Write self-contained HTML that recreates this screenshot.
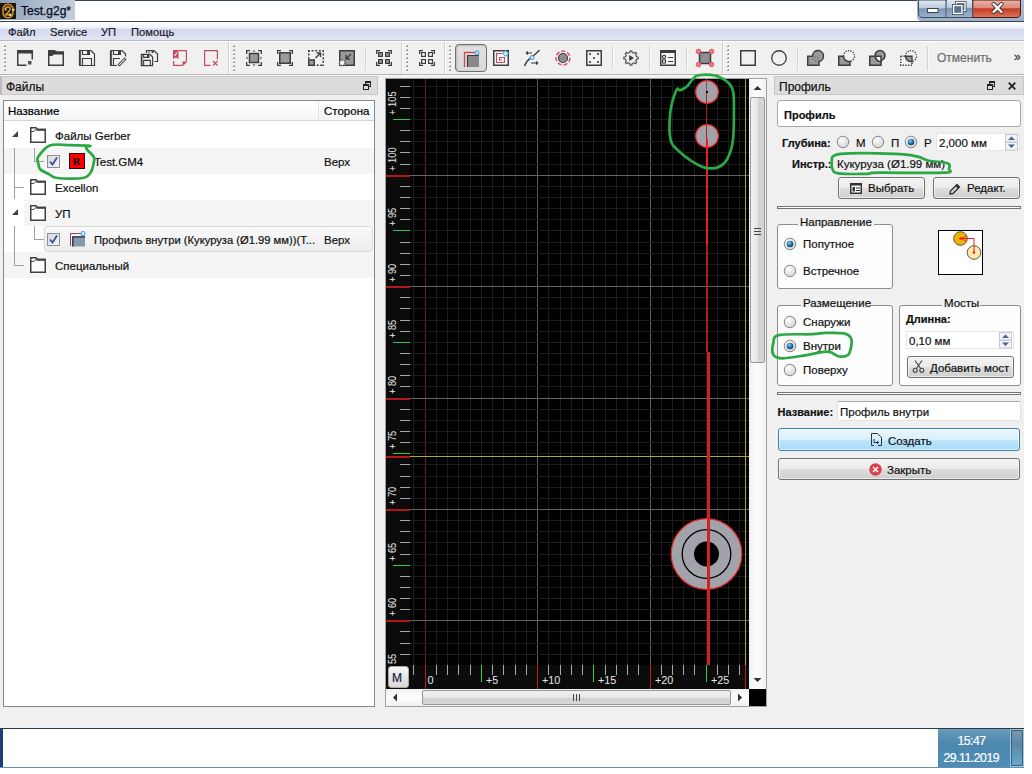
<!DOCTYPE html>
<html><head><meta charset="utf-8">
<style>
*{box-sizing:border-box;margin:0;padding:0}
html,body{width:1032px;height:774px;overflow:hidden;background:#fff;font-family:"Liberation Sans",sans-serif;font-size:11.5px;color:#000}
.a{position:absolute}
.t{position:absolute;white-space:nowrap;line-height:1;-webkit-text-stroke:0.2px currentColor}
.b{font-weight:bold;font-size:11px}
svg{position:absolute;overflow:visible}
</style></head><body>
<!-- window background -->
<div class="a" style="left:0;top:0;width:1024px;height:728px;background:#f0f0f0"></div>

<!-- TITLE BAR -->
<div class="a" style="left:0;top:0;width:1024px;height:21px;background:#fff;border-top:1px solid #3a4652"></div><div class="a" style="left:0;top:0;width:75px;height:1px;background:#8fa2b8"></div>
<div class="a" style="left:0;top:0;width:75px;height:20px;background:linear-gradient(100deg,#8d9fb6 0%,#a9b8ca 45%,#c3cfdc 100%)"></div>
<svg style="left:0;top:3px" width="16" height="16"><rect x="0" y="0" width="16" height="16" fill="#1c1a0e"/><rect x="3" y="1.2" width="10" height="13.6" rx="5" ry="5" fill="none" stroke="#d98f2e" stroke-width="1.5"/><path d="M5.5 6 Q6 3.8 8 3.8 Q10.3 3.8 10.2 6 Q10 7.8 5.6 11.8 H10.5" fill="none" stroke="#e0962e" stroke-width="1.6"/><rect x="4.5" y="5.5" width="2" height="2" fill="#e8e0a0" opacity=".8"/><rect x="12" y="5.8" width="2.5" height="2" fill="#f0e8b0" opacity=".85"/><rect x="9" y="10.5" width="2.5" height="2.5" fill="#f0e8b0" opacity=".8"/></svg>
<div class="t" style="left:21px;top:5px;font-size:12px;color:#050a20;-webkit-text-stroke:0.25px #050a20">Test.g2g*</div>
<!-- caption buttons -->
<svg style="left:916px;top:0" width="108" height="21">
<defs>
<linearGradient id="cbB" x1="0" y1="0" x2="0" y2="1"><stop offset="0" stop-color="#e2e9f1"/><stop offset="0.45" stop-color="#c0cddd"/><stop offset="0.5" stop-color="#7b95b5"/><stop offset="1" stop-color="#9fb4cc"/></linearGradient>
<linearGradient id="cbR" x1="0" y1="0" x2="0" y2="1"><stop offset="0" stop-color="#eab1a6"/><stop offset="0.45" stop-color="#da8b7c"/><stop offset="0.5" stop-color="#c23a24"/><stop offset="1" stop-color="#e0765f"/></linearGradient>
<linearGradient id="cbF" x1="0" y1="0" x2="0" y2="1"><stop offset="0" stop-color="#aebfd3"/><stop offset="1" stop-color="#9cb0c8"/></linearGradient>
</defs>
<path d="M1 0 H108 V21 H6 Q1 21 1 16 Z" fill="url(#cbF)"/>
<path d="M2.5 0 V13 Q2.5 17.5 7 17.5 H30 V0 Z" fill="url(#cbB)" stroke="#3e4c60" stroke-width="1"/>
<rect x="30.5" y="-1" width="26" height="18.5" fill="url(#cbB)" stroke="#3e4c60" stroke-width="1"/>
<path d="M57 0 V17.5 H100 Q104.5 17.5 104.5 13 V0 Z" fill="url(#cbR)" stroke="#4a1a14" stroke-width="1"/>
<path d="M30.5 1 V17 M57 1 V17" stroke="#dfe7f0" stroke-width="0.6" opacity=".6"/>
<rect x="11.5" y="8.5" width="10.5" height="4" fill="#fff" stroke="#3a4658" stroke-width="1"/>
<rect x="40.5" y="2.5" width="8.5" height="8" fill="none" stroke="#3a4658" stroke-width="3"/>
<rect x="40.5" y="2.5" width="8.5" height="8" fill="none" stroke="#fff" stroke-width="1.4"/>
<rect x="37.5" y="5.5" width="8.5" height="8" fill="#6f86a4" stroke="#3a4658" stroke-width="3"/>
<rect x="37.5" y="5.5" width="8.5" height="8" fill="#5a7090" stroke="#fff" stroke-width="1.4"/>
<path d="M77.5 4 L85.5 12 M85.5 4 L77.5 12" stroke="#40302c" stroke-width="4" stroke-linecap="round"/>
<path d="M77.5 4 L85.5 12 M85.5 4 L77.5 12" stroke="#fff" stroke-width="2.4" stroke-linecap="round"/>
</svg>
<div class="a" style="left:0;top:21px;width:1024px;height:1px;background:#3a4450"></div>

<!-- MENU BAR -->
<div class="a" style="left:0;top:22px;width:1024px;height:19px;background:linear-gradient(#ffffff 0px,#eef1f8 6px,#d3d9ec 7px,#e1e5f3 18px);border-bottom:1px solid #b5b8c5"></div>
<div class="a" style="left:0;top:41px;width:1024px;height:1px;background:#fff"></div>
<div class="t" style="left:8px;top:27px;font-size:11.2px;color:#1a1a2a">Файл</div>
<div class="t" style="left:50px;top:27px;font-size:11.2px;color:#1a1a2a">Service</div>
<div class="t" style="left:101px;top:27px;font-size:11.2px;color:#1a1a2a">УП</div>
<div class="t" style="left:131px;top:27px;font-size:11.2px;color:#1a1a2a">Помощь</div>

<!-- TOOLBAR -->
<div class="a" style="left:0;top:74px;width:1024px;height:2px;border-top:1px solid #b4b4b4;border-bottom:1px solid #f8f8f8"></div>
<div class="a" style="left:0;top:42px;width:1024px;height:31px;background:#f0f0f0"></div>
<svg style="left:3px;top:45px" width="4" height="28" shape-rendering="crispEdges"><rect x="2" y="0" width="1" height="1" fill="#b0b0b0"/><rect x="1" y="1" width="2" height="1" fill="#8c8c8c"/><rect x="2" y="2" width="1" height="1" fill="#fff"/><rect x="2" y="4" width="1" height="1" fill="#b0b0b0"/><rect x="1" y="5" width="2" height="1" fill="#8c8c8c"/><rect x="2" y="6" width="1" height="1" fill="#fff"/><rect x="2" y="8" width="1" height="1" fill="#b0b0b0"/><rect x="1" y="9" width="2" height="1" fill="#8c8c8c"/><rect x="2" y="10" width="1" height="1" fill="#fff"/><rect x="2" y="12" width="1" height="1" fill="#b0b0b0"/><rect x="1" y="13" width="2" height="1" fill="#8c8c8c"/><rect x="2" y="14" width="1" height="1" fill="#fff"/><rect x="2" y="16" width="1" height="1" fill="#b0b0b0"/><rect x="1" y="17" width="2" height="1" fill="#8c8c8c"/><rect x="2" y="18" width="1" height="1" fill="#fff"/><rect x="2" y="20" width="1" height="1" fill="#b0b0b0"/><rect x="1" y="21" width="2" height="1" fill="#8c8c8c"/><rect x="2" y="22" width="1" height="1" fill="#fff"/><rect x="2" y="24" width="1" height="1" fill="#b0b0b0"/><rect x="1" y="25" width="2" height="1" fill="#8c8c8c"/><rect x="2" y="26" width="1" height="1" fill="#fff"/></svg>
<svg style="left:232px;top:45px" width="4" height="28" shape-rendering="crispEdges"><rect x="2" y="0" width="1" height="1" fill="#b0b0b0"/><rect x="1" y="1" width="2" height="1" fill="#8c8c8c"/><rect x="2" y="2" width="1" height="1" fill="#fff"/><rect x="2" y="4" width="1" height="1" fill="#b0b0b0"/><rect x="1" y="5" width="2" height="1" fill="#8c8c8c"/><rect x="2" y="6" width="1" height="1" fill="#fff"/><rect x="2" y="8" width="1" height="1" fill="#b0b0b0"/><rect x="1" y="9" width="2" height="1" fill="#8c8c8c"/><rect x="2" y="10" width="1" height="1" fill="#fff"/><rect x="2" y="12" width="1" height="1" fill="#b0b0b0"/><rect x="1" y="13" width="2" height="1" fill="#8c8c8c"/><rect x="2" y="14" width="1" height="1" fill="#fff"/><rect x="2" y="16" width="1" height="1" fill="#b0b0b0"/><rect x="1" y="17" width="2" height="1" fill="#8c8c8c"/><rect x="2" y="18" width="1" height="1" fill="#fff"/><rect x="2" y="20" width="1" height="1" fill="#b0b0b0"/><rect x="1" y="21" width="2" height="1" fill="#8c8c8c"/><rect x="2" y="22" width="1" height="1" fill="#fff"/><rect x="2" y="24" width="1" height="1" fill="#b0b0b0"/><rect x="1" y="25" width="2" height="1" fill="#8c8c8c"/><rect x="2" y="26" width="1" height="1" fill="#fff"/></svg>
<svg style="left:405px;top:45px" width="4" height="28" shape-rendering="crispEdges"><rect x="2" y="0" width="1" height="1" fill="#b0b0b0"/><rect x="1" y="1" width="2" height="1" fill="#8c8c8c"/><rect x="2" y="2" width="1" height="1" fill="#fff"/><rect x="2" y="4" width="1" height="1" fill="#b0b0b0"/><rect x="1" y="5" width="2" height="1" fill="#8c8c8c"/><rect x="2" y="6" width="1" height="1" fill="#fff"/><rect x="2" y="8" width="1" height="1" fill="#b0b0b0"/><rect x="1" y="9" width="2" height="1" fill="#8c8c8c"/><rect x="2" y="10" width="1" height="1" fill="#fff"/><rect x="2" y="12" width="1" height="1" fill="#b0b0b0"/><rect x="1" y="13" width="2" height="1" fill="#8c8c8c"/><rect x="2" y="14" width="1" height="1" fill="#fff"/><rect x="2" y="16" width="1" height="1" fill="#b0b0b0"/><rect x="1" y="17" width="2" height="1" fill="#8c8c8c"/><rect x="2" y="18" width="1" height="1" fill="#fff"/><rect x="2" y="20" width="1" height="1" fill="#b0b0b0"/><rect x="1" y="21" width="2" height="1" fill="#8c8c8c"/><rect x="2" y="22" width="1" height="1" fill="#fff"/><rect x="2" y="24" width="1" height="1" fill="#b0b0b0"/><rect x="1" y="25" width="2" height="1" fill="#8c8c8c"/><rect x="2" y="26" width="1" height="1" fill="#fff"/></svg>
<svg style="left:448px;top:45px" width="4" height="28" shape-rendering="crispEdges"><rect x="2" y="0" width="1" height="1" fill="#b0b0b0"/><rect x="1" y="1" width="2" height="1" fill="#8c8c8c"/><rect x="2" y="2" width="1" height="1" fill="#fff"/><rect x="2" y="4" width="1" height="1" fill="#b0b0b0"/><rect x="1" y="5" width="2" height="1" fill="#8c8c8c"/><rect x="2" y="6" width="1" height="1" fill="#fff"/><rect x="2" y="8" width="1" height="1" fill="#b0b0b0"/><rect x="1" y="9" width="2" height="1" fill="#8c8c8c"/><rect x="2" y="10" width="1" height="1" fill="#fff"/><rect x="2" y="12" width="1" height="1" fill="#b0b0b0"/><rect x="1" y="13" width="2" height="1" fill="#8c8c8c"/><rect x="2" y="14" width="1" height="1" fill="#fff"/><rect x="2" y="16" width="1" height="1" fill="#b0b0b0"/><rect x="1" y="17" width="2" height="1" fill="#8c8c8c"/><rect x="2" y="18" width="1" height="1" fill="#fff"/><rect x="2" y="20" width="1" height="1" fill="#b0b0b0"/><rect x="1" y="21" width="2" height="1" fill="#8c8c8c"/><rect x="2" y="22" width="1" height="1" fill="#fff"/><rect x="2" y="24" width="1" height="1" fill="#b0b0b0"/><rect x="1" y="25" width="2" height="1" fill="#8c8c8c"/><rect x="2" y="26" width="1" height="1" fill="#fff"/></svg>
<svg style="left:726px;top:45px" width="4" height="28" shape-rendering="crispEdges"><rect x="2" y="0" width="1" height="1" fill="#b0b0b0"/><rect x="1" y="1" width="2" height="1" fill="#8c8c8c"/><rect x="2" y="2" width="1" height="1" fill="#fff"/><rect x="2" y="4" width="1" height="1" fill="#b0b0b0"/><rect x="1" y="5" width="2" height="1" fill="#8c8c8c"/><rect x="2" y="6" width="1" height="1" fill="#fff"/><rect x="2" y="8" width="1" height="1" fill="#b0b0b0"/><rect x="1" y="9" width="2" height="1" fill="#8c8c8c"/><rect x="2" y="10" width="1" height="1" fill="#fff"/><rect x="2" y="12" width="1" height="1" fill="#b0b0b0"/><rect x="1" y="13" width="2" height="1" fill="#8c8c8c"/><rect x="2" y="14" width="1" height="1" fill="#fff"/><rect x="2" y="16" width="1" height="1" fill="#b0b0b0"/><rect x="1" y="17" width="2" height="1" fill="#8c8c8c"/><rect x="2" y="18" width="1" height="1" fill="#fff"/><rect x="2" y="20" width="1" height="1" fill="#b0b0b0"/><rect x="1" y="21" width="2" height="1" fill="#8c8c8c"/><rect x="2" y="22" width="1" height="1" fill="#fff"/><rect x="2" y="24" width="1" height="1" fill="#b0b0b0"/><rect x="1" y="25" width="2" height="1" fill="#8c8c8c"/><rect x="2" y="26" width="1" height="1" fill="#fff"/></svg>
<div class="a" style="left:228px;top:42px;width:2px;height:32px;border-left:1px solid #d0d0d0;border-right:1px solid #fff"></div>
<div class="a" style="left:401px;top:42px;width:2px;height:32px;border-left:1px solid #d0d0d0;border-right:1px solid #fff"></div>
<div class="a" style="left:444px;top:42px;width:2px;height:32px;border-left:1px solid #d0d0d0;border-right:1px solid #fff"></div>
<div class="a" style="left:722px;top:42px;width:2px;height:32px;border-left:1px solid #d0d0d0;border-right:1px solid #fff"></div>
<div class="a" style="left:365px;top:46px;width:2px;height:24px;border-left:1px solid #d4d4d4;border-right:1px solid #fafafa"></div>
<div class="a" style="left:612px;top:46px;width:2px;height:24px;border-left:1px solid #d4d4d4;border-right:1px solid #fafafa"></div>
<div class="a" style="left:649px;top:46px;width:2px;height:24px;border-left:1px solid #d4d4d4;border-right:1px solid #fafafa"></div>
<div class="a" style="left:686px;top:46px;width:2px;height:24px;border-left:1px solid #d4d4d4;border-right:1px solid #fafafa"></div>
<div class="a" style="left:797px;top:46px;width:2px;height:24px;border-left:1px solid #d4d4d4;border-right:1px solid #fafafa"></div>
<div class="a" style="left:927px;top:46px;width:2px;height:24px;border-left:1px solid #d4d4d4;border-right:1px solid #fafafa"></div>
<svg style="left:17px;top:50px" width="16" height="16" viewBox="0 0 16 16"><rect x="0" y="0" width="16" height="3.5" fill="#3d3d3d"/><path d="M0.75 3 V15.25 H9.5 M15.25 3 V9.5" fill="none" stroke="#3d3d3d" stroke-width="1.5"/><rect x="11" y="11" width="3.5" height="3.5" fill="#555"/></svg>
<svg style="left:48px;top:50px" width="16" height="16" viewBox="0 0 16 16"><path d="M0 0 H7 L9 2 H16 V4.5 H6 L4 6 H0 Z" fill="#3d3d3d"/><rect x="0.75" y="2" width="14.5" height="13.25" fill="none" stroke="#3d3d3d" stroke-width="1.5"/></svg>
<svg style="left:79px;top:50px" width="16" height="16" viewBox="0 0 16 16"><g transform="translate(0,0)"><path d="M0.5 0.5 H12 L15.5 4 V15.5 H0.5 Z" fill="none" stroke="#3d3d3d" stroke-width="1.2"/><path d="M1.6 1 V15" stroke="#3d3d3d" stroke-width="0.9"/><path d="M3.5 0.5 V4.5 H10.5 V0.5" fill="none" stroke="#3d3d3d" stroke-width="1.1"/><rect x="8" y="0.5" width="2.5" height="4" fill="#3d3d3d"/><path d="M3.5 15.5 V8.5 H12.5 V15.5" fill="none" stroke="#3d3d3d" stroke-width="1.1"/></g></svg>
<svg style="left:110px;top:50px" width="16" height="16" viewBox="0 0 16 16"><path d="M0.5 0.5 H12 L15.5 4 V6.5 M7 15.5 H0.5 V0.5" fill="none" stroke="#3d3d3d" stroke-width="1.2"/><path d="M1.6 1 V15" stroke="#3d3d3d" stroke-width="0.9"/><path d="M3.5 0.5 V4.5 H10.5 V0.5" fill="none" stroke="#3d3d3d" stroke-width="1.1"/><rect x="8" y="0.5" width="2.5" height="4" fill="#3d3d3d"/><path d="M3.5 15.5 V8.5 H10" fill="none" stroke="#3d3d3d" stroke-width="1.1"/><path d="M8.5 15.5 L15.5 8.5" stroke="#3d3d3d" stroke-width="3"/><path d="M9.2 14.8 L14.8 9.2" stroke="#e8e8e8" stroke-width="1.1"/></svg>
<svg style="left:141px;top:50px" width="18" height="16" viewBox="0 0 18 16"><path d="M5.5 3 V0.5 H13 L16.5 4 V11.5 H13.5" fill="none" stroke="#3d3d3d" stroke-width="1.2"/><path d="M8 0.5 V3 M12 0.5 V3" stroke="#3d3d3d" stroke-width="1"/><rect x="10.5" y="0.5" width="1.8" height="2.5" fill="#3d3d3d"/><g transform="translate(0,4) scale(0.75)"><g transform="translate(0,0)"><path d="M0.5 0.5 H12 L15.5 4 V15.5 H0.5 Z" fill="#f0f0f0" stroke="#3d3d3d" stroke-width="1.6"/><path d="M1.6 1 V15" stroke="#3d3d3d" stroke-width="0.9"/><path d="M3.5 0.5 V4.5 H10.5 V0.5" fill="none" stroke="#3d3d3d" stroke-width="1.5"/><rect x="8" y="0.5" width="2.5" height="4" fill="#3d3d3d"/><path d="M3.5 15.5 V8.5 H12.5 V15.5" fill="none" stroke="#3d3d3d" stroke-width="1.5"/></g></g></svg>
<svg style="left:173px;top:50px" width="14" height="16" viewBox="0 0 14 16"><path d="M0 0 H5.5 V9 L2.75 7.5 L0 9 Z" fill="#c44a5e"/><path d="M1.5 6 L4 2.5" stroke="#fff" stroke-width="1.1"/><path d="M5.5 0.6 H13.4 V11.5 M0.6 11 V15.4 H9.5" fill="none" stroke="#c44a5e" stroke-width="1.2"/><path d="M14 11.5 V12 L10 16 H9.5 V11.5 Z" fill="#c44a5e"/></svg>
<svg style="left:204px;top:50px" width="14" height="16" viewBox="0 0 14 16"><path d="M6.5 15.4 H0.6 V0.6 H13.4 V9.5" fill="none" stroke="#c44a5e" stroke-width="1.2"/><path d="M9 11 L13.5 15.5 M13.5 11 L9 15.5" stroke="#c44a5e" stroke-width="1.1"/></svg>
<svg style="left:246px;top:50px" width="16" height="16" viewBox="0 0 16 16"><path d="M0.65 4 V0.65 H4 M12 0.65 H15.35 V4 M15.35 12 V15.35 H12 M4 15.35 H0.65 V12" fill="none" stroke="#3d3d3d" stroke-width="1.3"/><rect x="3.5" y="3.5" width="9" height="9" fill="#9a9a9a" stroke="#3d3d3d" stroke-width="1.5"/><path d="M8 0 L9.5 1.5 H6.5Z M8 16 L9.5 14.5 H6.5Z M0 8 L1.5 6.5 V9.5Z M16 8 L14.5 6.5 V9.5Z" fill="#3d3d3d"/></svg>
<svg style="left:277px;top:50px" width="16" height="16" viewBox="0 0 16 16"><path d="M0.65 4 V0.65 H4 M12 0.65 H15.35 V4 M15.35 12 V15.35 H12 M4 15.35 H0.65 V12" fill="none" stroke="#3d3d3d" stroke-width="1.3"/><rect x="2.75" y="2.75" width="10.5" height="10.5" fill="#9a9a9a" stroke="#3d3d3d" stroke-width="1.5"/></svg>
<svg style="left:308px;top:50px" width="16" height="16" viewBox="0 0 16 16"><path d="M0.75 0 V16 M0 0.75 H16 M15.25 0 V16 M5 15.25 H16" fill="none" stroke="#3d3d3d" stroke-width="1.5" stroke-dasharray="2 1.6"/><rect x="0.75" y="10" width="5.5" height="5.25" fill="#9a9a9a" stroke="#3d3d3d" stroke-width="1.5"/><path d="M7.5 8 L12.5 3 M8.5 3 H12.5 V7" fill="none" stroke="#3d3d3d" stroke-width="1.4"/></svg>
<svg style="left:339px;top:50px" width="16" height="16" viewBox="0 0 16 16"><rect x="0.75" y="0.75" width="14.5" height="14.5" fill="#9a9a9a" stroke="#3d3d3d" stroke-width="1.5"/><path d="M12 4 L7 9 M7 5 V9 H11" fill="none" stroke="#3d3d3d" stroke-width="1.4"/><circle cx="3.2" cy="12.8" r="2.9" fill="#f0f0f0" stroke="#3d3d3d" stroke-width="1.2" stroke-dasharray="1.5 1"/></svg>
<svg style="left:376px;top:50px" width="16" height="16" viewBox="0 0 16 16"><path d="M0.65 4 V0.65 H4 M12 0.65 H15.35 V4 M15.35 12 V15.35 H12 M4 15.35 H0.65 V12" fill="none" stroke="#3d3d3d" stroke-width="1.3"/><rect x="2.6" y="2.6" width="3.8" height="3.8" fill="#9a9a9a" stroke="#3d3d3d" stroke-width="1.2"/><rect x="2.6" y="9.6" width="3.8" height="3.8" fill="#9a9a9a" stroke="#3d3d3d" stroke-width="1.2"/><rect x="9.6" y="2.6" width="3.8" height="3.8" fill="#9a9a9a" stroke="#3d3d3d" stroke-width="1.2"/><rect x="9.6" y="9.6" width="3.8" height="3.8" fill="#9a9a9a" stroke="#3d3d3d" stroke-width="1.2"/></svg>
<svg style="left:419px;top:50px" width="16" height="16" viewBox="0 0 16 16"><path d="M0.65 4 V0.65 H4 M12 0.65 H15.35 V4 M15.35 12 V15.35 H12 M4 15.35 H0.65 V12" fill="none" stroke="#3d3d3d" stroke-width="1.3"/><rect x="2.6" y="2.6" width="3.8" height="3.8" fill="#fff" stroke="#3d3d3d" stroke-width="1.2"/><rect x="2.6" y="9.6" width="3.8" height="3.8" fill="#fff" stroke="#3d3d3d" stroke-width="1.2"/><rect x="9.6" y="2.6" width="3.8" height="3.8" fill="#fff" stroke="#3d3d3d" stroke-width="1.2"/><rect x="9.6" y="9.6" width="3.8" height="3.8" fill="#fff" stroke="#3d3d3d" stroke-width="1.2"/></svg>
<div class="a" style="left:455px;top:44px;width:32px;height:28px;border:1px solid #6e6e6e;border-radius:4px;background:linear-gradient(#e2e2e2,#d9d9d9);box-shadow:inset 1px 1px 2px rgba(0,0,0,.18)"></div>
<svg style="left:463px;top:51px" width="18" height="17" viewBox="0 0 18 17"><path d="M1.5 16 V1.5 H13" fill="none" stroke="#d04a5a" stroke-width="1.3"/><rect x="4" y="4" width="12" height="12" fill="#8a8a8a"/><path d="M4.5 16 V4.5 H16" fill="none" stroke="#3d3d3d" stroke-width="1.2"/><circle cx="14" cy="1.8" r="2" fill="#bfe6ff" stroke="#3c9ce0" stroke-width="1"/></svg>
<svg style="left:493px;top:50px" width="16" height="16" viewBox="0 0 16 16"><rect x="0.75" y="0.75" width="14.5" height="14.5" fill="#fff" stroke="#3d3d3d" stroke-width="1.5"/><path d="M11 3.5 H3.5 V12.5 H11.5 V7.5 H6.5 V10 H9" fill="none" stroke="#c44a5e" stroke-width="1.2"/><path d="M12.5 0.5 L15.5 3.5 L12.5 6.5 L9.5 3.5 Z" fill="#bfe6ff" stroke="#3c9ce0" stroke-width="1"/></svg>
<svg style="left:524px;top:50px" width="16" height="16" viewBox="0 0 16 16"><path d="M0.5 16 C3 9 6 9 8 7 S13 3 15.5 0" fill="none" stroke="#3d3d3d" stroke-width="1.3"/><path d="M2 3 H8 M2 3 L4 1.5 M2 3 L4 4.5 M7 13 H14 M14 13 L12 11.5 M14 13 L12 14.5" fill="none" stroke="#3d3d3d" stroke-width="1.1"/><circle cx="8" cy="7.5" r="2" fill="#bfe6ff" stroke="#3c9ce0" stroke-width="1"/></svg>
<svg style="left:555px;top:50px" width="16" height="16" viewBox="0 0 16 16"><circle cx="8" cy="8" r="7" fill="none" stroke="#d9506a" stroke-width="1.5" stroke-dasharray="4.2 2"/><circle cx="8" cy="8" r="4.5" fill="#8c8c8c" stroke="#3d3d3d" stroke-width="1.2"/></svg>
<svg style="left:586px;top:50px" width="16" height="16" viewBox="0 0 16 16"><rect x="0.75" y="0.75" width="14.5" height="14.5" fill="#f4f4f4" stroke="#3d3d3d" stroke-width="1.5"/><circle cx="4" cy="4" r="1.1" fill="#3d3d3d"/><circle cx="12" cy="4" r="1.1" fill="#3d3d3d"/><circle cx="8" cy="8" r="1.1" fill="#3d3d3d"/><circle cx="4" cy="12" r="1.1" fill="#3d3d3d"/><circle cx="12" cy="12" r="1.1" fill="#3d3d3d"/></svg>
<svg style="left:623px;top:50px" width="16" height="16" viewBox="0 0 16 16"><path d="M13.47 6.78 L15.14 7.07 L15.14 8.93 L13.47 9.22 L12.73 11.00 L13.71 12.39 L12.39 13.71 L11.00 12.73 L9.22 13.47 L8.93 15.14 L7.07 15.14 L6.78 13.47 L5.00 12.73 L3.61 13.71 L2.29 12.39 L3.27 11.00 L2.53 9.22 L0.86 8.93 L0.86 7.07 L2.53 6.78 L3.27 5.00 L2.29 3.61 L3.61 2.29 L5.00 3.27 L6.78 2.53 L7.07 0.86 L8.93 0.86 L9.22 2.53 L11.00 3.27 L12.39 2.29 L13.71 3.61 L12.73 5.00 Z" fill="none" stroke="#505050" stroke-width="1.2" stroke-linejoin="round"/><path d="M6.2 5 L11 8 L6.2 11 Z" fill="#3d3d3d"/></svg>
<svg style="left:660px;top:50px" width="16" height="16" viewBox="0 0 16 16"><rect x="0.75" y="0.75" width="14.5" height="14.5" fill="#f4f4f4" stroke="#3d3d3d" stroke-width="1.5"/><rect x="0" y="0" width="16" height="3" fill="#3d3d3d"/><circle cx="4" cy="7" r="1.6" fill="none" stroke="#3d3d3d" stroke-width="1.1"/><rect x="2.5" y="10" width="3" height="3" fill="none" stroke="#3d3d3d" stroke-width="1.1"/><path d="M7.5 7.5 H13 M7.5 11.5 H13" stroke="#3d3d3d" stroke-width="1.3" shape-rendering="crispEdges"/></svg>
<svg style="left:696px;top:49px" width="18" height="18" viewBox="0 0 18 18"><rect x="3.5" y="3.5" width="11" height="11" fill="#8e8e8e" stroke="#3d3d3d" stroke-width="1.5"/><circle cx="2.5" cy="2.5" r="2.3" fill="#f07888" stroke="#d44858" stroke-width="0.8"/><circle cx="15.5" cy="2.5" r="2.3" fill="#f07888" stroke="#d44858" stroke-width="0.8"/><circle cx="2.5" cy="15.5" r="2.3" fill="#f07888" stroke="#d44858" stroke-width="0.8"/><circle cx="15.5" cy="15.5" r="2.3" fill="#f07888" stroke="#d44858" stroke-width="0.8"/></svg>
<svg style="left:740px;top:50px" width="16" height="16" viewBox="0 0 16 16"><rect x="0.75" y="0.75" width="14.5" height="14.5" fill="none" stroke="#3d3d3d" stroke-width="1.5"/></svg>
<svg style="left:771px;top:50px" width="16" height="16" viewBox="0 0 16 16"><circle cx="8" cy="8" r="7.25" fill="none" stroke="#3d3d3d" stroke-width="1.3"/></svg>
<svg style="left:807px;top:50px" width="17" height="16" viewBox="0 0 17 16"><path d="M0.75 6.25 H5.5 A5.5 5.5 0 1 1 12 11.5 V15.25 H0.75 Z" fill="#9a9a9a" stroke="#3d3d3d" stroke-width="1.5"/><g fill="#555"><circle cx="8" cy="7" r=".6"/><circle cx="10.5" cy="7" r=".6"/><circle cx="6" cy="9" r=".6"/><circle cx="11" cy="9" r=".6"/><circle cx="8.5" cy="11" r=".6"/></g></svg>
<svg style="left:838px;top:50px" width="18" height="16" viewBox="0 0 18 16"><path d="M0.75 6.25 H5.5 A5.5 5.5 0 0 0 12 11.5 V15.25 H0.75 Z" fill="#9a9a9a" stroke="#3d3d3d" stroke-width="1.5"/><path d="M5.5 6.25 A5.5 5.5 0 1 1 12 11.5" fill="none" stroke="#3d3d3d" stroke-width="1.4" stroke-dasharray="1.2 1.3"/></svg>
<svg style="left:869px;top:50px" width="18" height="16" viewBox="0 0 18 16"><rect x="0.75" y="6.25" width="11.25" height="9" fill="#9a9a9a" stroke="#3d3d3d" stroke-width="1.5"/><circle cx="11" cy="5.5" r="5" fill="#9a9a9a" stroke="#3d3d3d" stroke-width="1.5"/><path d="M6.5 6.25 H12 V11.5 A5 5 0 0 1 6.5 6.25 Z" fill="#fff" stroke="#3d3d3d" stroke-width="1.5"/></svg>
<svg style="left:900px;top:50px" width="18" height="16" viewBox="0 0 18 16"><path d="M0.75 6.25 H5.5 M0.75 6.25 V15.25 H12 V11.5" fill="none" stroke="#3d3d3d" stroke-width="1.5" stroke-dasharray="1.3 1.4"/><path d="M5.5 6.25 H12 V11.5 A5.5 5.5 0 0 1 5.5 6.25 Z" fill="#9a9a9a" stroke="#3d3d3d" stroke-width="1.4"/><path d="M5.5 6.25 A5.5 5.5 0 1 1 12 11.5" fill="none" stroke="#3d3d3d" stroke-width="1.4" stroke-dasharray="1.2 1.3"/></svg>
<div class="t" style="left:937px;top:52px;font-size:12px;color:#6d6d6d">Отменить</div>
<div class="t" style="left:1014px;top:51px;font-size:12px;color:#333">»</div>

<!-- LEFT DOCK -->
<div class="a" style="left:0;top:76px;width:378px;height:19px;background:#dcdcdc;border:1px solid #c8c8c8;border-left:2px solid #bdbdbd"></div>
<div class="t" style="left:6px;top:81px;font-size:12px;color:#101010">Файлы</div>
<svg style="left:363px;top:81px" width="9" height="10" shape-rendering="crispEdges"><rect x="2" y="0" width="6" height="2" fill="#222"/><rect x="2" y="0" width="1" height="3" fill="#222"/><rect x="7" y="0" width="1" height="6" fill="#222"/><rect x="6" y="5" width="2" height="1" fill="#222"/><rect x="0" y="3" width="6" height="2" fill="#222"/><rect x="0" y="3" width="1" height="6" fill="#222"/><rect x="5" y="3" width="1" height="6" fill="#222"/><rect x="0" y="8" width="6" height="1" fill="#222"/></svg>
<div class="a" style="left:3px;top:100px;width:372px;height:607px;background:#fff;border:1px solid #828790"></div>
<div class="a" style="left:4px;top:101px;width:370px;height:20px;background:linear-gradient(#fff,#f5f5f5);border-bottom:1px solid #d5d5d5"></div>
<div class="a" style="left:318px;top:101px;width:1px;height:20px;background:#e3e3e3"></div>
<div class="t" style="left:8px;top:106px">Название</div>
<div class="t" style="left:324px;top:106px">Сторона</div>
<!-- tree rows -->
<div class="a" style="left:4px;top:148px;width:370px;height:26px;background:#f5f5f5"></div>
<div class="a" style="left:24px;top:200px;width:350px;height:26px;background:#f5f5f5"></div>
<div class="a" style="left:4px;top:252px;width:370px;height:26px;background:#f5f5f5"></div>
<div class="a" style="left:44px;top:226px;width:329px;height:26px;border:1px solid #d9d9d9;border-radius:3px;background:linear-gradient(#fafafa,#ececec)"></div>
<svg style="left:4px;top:120px" width="60" height="160" shape-rendering="crispEdges">
<g fill="#a0a0a0">
<rect x="10" y="28" width="1" height="51"/><rect x="10" y="67" width="10" height="1"/>
<rect x="10" y="106" width="1" height="40"/><rect x="10" y="145" width="10" height="1"/>
<rect x="30" y="28" width="1" height="14"/><rect x="30" y="41" width="10" height="1"/>
<rect x="30" y="106" width="1" height="14"/><rect x="30" y="119" width="10" height="1"/>
</g>
<path d="M8 17 L14 11 V17 Z" fill="#404040" shape-rendering="auto"/>
<path d="M8 95 L14 89 V95 Z" fill="#404040" shape-rendering="auto"/>
</svg>
<svg style="left:30px;top:127px" width="16" height="16" viewBox="0 0 16 16"><path d="M0.75 15.25 V0.75 H6 L7.5 2.5 H15.25 V15.25 Z" fill="#fff" stroke="#404040" stroke-width="1.5"/><rect x="6.5" y="1.75" width="9.5" height="2" fill="#404040"/><path d="M0.75 4.5 H3.5 L6 2.5" fill="none" stroke="#404040" stroke-width="1"/></svg>
<div class="t" style="left:55px;top:131px;font-size:11.5px;color:#111">Файлы Gerber</div>
<svg style="left:30px;top:179px" width="16" height="16" viewBox="0 0 16 16"><path d="M0.75 15.25 V0.75 H6 L7.5 2.5 H15.25 V15.25 Z" fill="#fff" stroke="#404040" stroke-width="1.5"/><rect x="6.5" y="1.75" width="9.5" height="2" fill="#404040"/><path d="M0.75 4.5 H3.5 L6 2.5" fill="none" stroke="#404040" stroke-width="1"/></svg>
<div class="t" style="left:55px;top:183px;font-size:11.5px;color:#111">Excellon</div>
<svg style="left:30px;top:205px" width="16" height="16" viewBox="0 0 16 16"><path d="M0.75 15.25 V0.75 H6 L7.5 2.5 H15.25 V15.25 Z" fill="#fff" stroke="#404040" stroke-width="1.5"/><rect x="6.5" y="1.75" width="9.5" height="2" fill="#404040"/><path d="M0.75 4.5 H3.5 L6 2.5" fill="none" stroke="#404040" stroke-width="1"/></svg>
<div class="t" style="left:55px;top:209px;font-size:11.5px;color:#111">УП</div>
<svg style="left:30px;top:257px" width="16" height="16" viewBox="0 0 16 16"><path d="M0.75 15.25 V0.75 H6 L7.5 2.5 H15.25 V15.25 Z" fill="#fff" stroke="#404040" stroke-width="1.5"/><rect x="6.5" y="1.75" width="9.5" height="2" fill="#404040"/><path d="M0.75 4.5 H3.5 L6 2.5" fill="none" stroke="#404040" stroke-width="1"/></svg>
<div class="t" style="left:55px;top:261px;font-size:11.5px;color:#111">Специальный</div>
<div class="a" style="left:47px;top:155px;width:13px;height:13px;border:1px solid #8e8f8f;background:linear-gradient(135deg,#d6d9df,#f4f5f7)"></div><svg style="left:47px;top:155px" width="13" height="13"><path d="M3 6.5 L5.5 9.5 L10 2.5" fill="none" stroke="#3b4f94" stroke-width="1.8"/></svg>
<div class="a" style="left:69px;top:153px;width:16px;height:16px;background:#f00;border:1px solid #300"></div>
<div class="t" style="left:72.5px;top:156px;font-family:'Liberation Serif',serif;font-weight:bold;font-size:11px;-webkit-text-stroke:0;color:#000">R</div>
<div class="t" style="left:94px;top:157px;color:#111">Test.GM4</div>
<div class="t" style="left:324px;top:157px;color:#111">Верх</div>
<div class="a" style="left:47px;top:233px;width:13px;height:13px;border:1px solid #8e8f8f;background:linear-gradient(135deg,#d6d9df,#f4f5f7)"></div><svg style="left:47px;top:233px" width="13" height="13"><path d="M3 6.5 L5.5 9.5 L10 2.5" fill="none" stroke="#3b4f94" stroke-width="1.8"/></svg>
<svg style="left:69px;top:230px" width="17" height="17" viewBox="0 0 17 17"><path d="M1.5 16 V3.5 H13" fill="none" stroke="#a03c62" stroke-width="1"/><rect x="3.5" y="6.5" width="12.5" height="10" fill="#8797ae"/><path d="M3.8 16.5 V6.8 H16" fill="none" stroke="#1e2a3a" stroke-width="1.3"/><circle cx="14" cy="3.5" r="2" fill="#dff2ff" stroke="#4aa8e0" stroke-width="1.1"/></svg>
<div class="t" style="left:94px;top:235px;font-size:11.2px;color:#111">Профиль внутри (Кукуруза (Ø1.99 мм))(T...</div>
<div class="t" style="left:324px;top:235px;color:#111">Верх</div>

<!-- CANVAS -->
<div class="a" style="left:385px;top:78px;width:382px;height:629px;border:1px solid #a0a0a0;background:#000"></div>
<svg style="left:386px;top:79px" width="363" height="610" shape-rendering="crispEdges">
<rect x="0" y="0" width="363" height="610" fill="#000"/>
<rect x="27" y="0" width="1" height="586" fill="#1c1c1c"/>
<rect x="39" y="0" width="1" height="586" fill="#781818"/>
<rect x="50" y="0" width="1" height="586" fill="#1c1c1c"/>
<rect x="61" y="0" width="1" height="586" fill="#1c1c1c"/>
<rect x="72" y="0" width="1" height="586" fill="#1c1c1c"/>
<rect x="84" y="0" width="1" height="586" fill="#1c1c1c"/>
<rect x="95" y="0" width="1" height="586" fill="#1c1c1c"/>
<rect x="106" y="0" width="1" height="586" fill="#1c1c1c"/>
<rect x="117" y="0" width="1" height="586" fill="#1c1c1c"/>
<rect x="129" y="0" width="1" height="586" fill="#1c1c1c"/>
<rect x="140" y="0" width="1" height="586" fill="#1c1c1c"/>
<rect x="151" y="0" width="1" height="586" fill="#5e5e5e"/>
<rect x="162" y="0" width="1" height="586" fill="#1c1c1c"/>
<rect x="174" y="0" width="1" height="586" fill="#1c1c1c"/>
<rect x="185" y="0" width="1" height="586" fill="#1c1c1c"/>
<rect x="196" y="0" width="1" height="586" fill="#1c1c1c"/>
<rect x="207" y="0" width="1" height="586" fill="#1c1c1c"/>
<rect x="219" y="0" width="1" height="586" fill="#1c1c1c"/>
<rect x="230" y="0" width="1" height="586" fill="#1c1c1c"/>
<rect x="241" y="0" width="1" height="586" fill="#1c1c1c"/>
<rect x="252" y="0" width="1" height="586" fill="#1c1c1c"/>
<rect x="264" y="0" width="1" height="586" fill="#5e5e5e"/>
<rect x="275" y="0" width="1" height="586" fill="#1c1c1c"/>
<rect x="286" y="0" width="1" height="586" fill="#1c1c1c"/>
<rect x="297" y="0" width="1" height="586" fill="#1c1c1c"/>
<rect x="308" y="0" width="1" height="586" fill="#1c1c1c"/>
<rect x="320" y="0" width="1" height="586" fill="#1c1c1c"/>
<rect x="331" y="0" width="1" height="586" fill="#1c1c1c"/>
<rect x="342" y="0" width="1" height="586" fill="#1c1c1c"/>
<rect x="353" y="0" width="1" height="586" fill="#1c1c1c"/>
<rect x="24" y="7" width="339" height="1" fill="#1c1c1c"/>
<rect x="24" y="18" width="339" height="1" fill="#1c1c1c"/>
<rect x="24" y="29" width="339" height="1" fill="#1c1c1c"/>
<rect x="24" y="40" width="339" height="1" fill="#1c1c1c"/>
<rect x="24" y="51" width="339" height="1" fill="#1c1c1c"/>
<rect x="24" y="62" width="339" height="1" fill="#1c1c1c"/>
<rect x="24" y="73" width="339" height="1" fill="#1c1c1c"/>
<rect x="24" y="85" width="339" height="1" fill="#1c1c1c"/>
<rect x="24" y="96" width="339" height="1" fill="#646464"/>
<rect x="24" y="107" width="339" height="1" fill="#1c1c1c"/>
<rect x="24" y="118" width="339" height="1" fill="#1c1c1c"/>
<rect x="24" y="129" width="339" height="1" fill="#1c1c1c"/>
<rect x="24" y="140" width="339" height="1" fill="#1c1c1c"/>
<rect x="24" y="151" width="339" height="1" fill="#1c1c1c"/>
<rect x="24" y="163" width="339" height="1" fill="#1c1c1c"/>
<rect x="24" y="174" width="339" height="1" fill="#1c1c1c"/>
<rect x="24" y="185" width="339" height="1" fill="#1c1c1c"/>
<rect x="24" y="196" width="339" height="1" fill="#1c1c1c"/>
<rect x="24" y="207" width="339" height="1" fill="#646464"/>
<rect x="24" y="218" width="339" height="1" fill="#1c1c1c"/>
<rect x="24" y="229" width="339" height="1" fill="#1c1c1c"/>
<rect x="24" y="241" width="339" height="1" fill="#1c1c1c"/>
<rect x="24" y="252" width="339" height="1" fill="#1c1c1c"/>
<rect x="24" y="263" width="339" height="1" fill="#1c1c1c"/>
<rect x="24" y="274" width="339" height="1" fill="#1c1c1c"/>
<rect x="24" y="285" width="339" height="1" fill="#1c1c1c"/>
<rect x="24" y="296" width="339" height="1" fill="#1c1c1c"/>
<rect x="24" y="307" width="339" height="1" fill="#1c1c1c"/>
<rect x="24" y="319" width="339" height="1" fill="#646464"/>
<rect x="24" y="330" width="339" height="1" fill="#1c1c1c"/>
<rect x="24" y="341" width="339" height="1" fill="#1c1c1c"/>
<rect x="24" y="352" width="339" height="1" fill="#1c1c1c"/>
<rect x="24" y="363" width="339" height="1" fill="#1c1c1c"/>
<rect x="24" y="374" width="339" height="1" fill="#1c1c1c"/>
<rect x="24" y="385" width="339" height="1" fill="#1c1c1c"/>
<rect x="24" y="397" width="339" height="1" fill="#1c1c1c"/>
<rect x="24" y="408" width="339" height="1" fill="#1c1c1c"/>
<rect x="24" y="419" width="339" height="1" fill="#1c1c1c"/>
<rect x="24" y="430" width="339" height="1" fill="#646464"/>
<rect x="24" y="441" width="339" height="1" fill="#1c1c1c"/>
<rect x="24" y="452" width="339" height="1" fill="#1c1c1c"/>
<rect x="24" y="463" width="339" height="1" fill="#1c1c1c"/>
<rect x="24" y="475" width="339" height="1" fill="#1c1c1c"/>
<rect x="24" y="486" width="339" height="1" fill="#1c1c1c"/>
<rect x="24" y="497" width="339" height="1" fill="#1c1c1c"/>
<rect x="24" y="508" width="339" height="1" fill="#1c1c1c"/>
<rect x="24" y="519" width="339" height="1" fill="#1c1c1c"/>
<rect x="24" y="530" width="339" height="1" fill="#1c1c1c"/>
<rect x="24" y="541" width="339" height="1" fill="#646464"/>
<rect x="24" y="552" width="339" height="1" fill="#1c1c1c"/>
<rect x="24" y="564" width="339" height="1" fill="#1c1c1c"/>
<rect x="24" y="575" width="339" height="1" fill="#1c1c1c"/>
<rect x="24" y="377" width="339" height="1" fill="#b4a440"/>
<rect x="359" y="0" width="1" height="586" fill="#b4a440"/>
<rect x="0" y="0" width="24" height="586" fill="#0b0b0b"/>
<rect x="14" y="7" width="10" height="1" fill="#a8a8a8"/>
<rect x="14" y="18" width="10" height="1" fill="#a8a8a8"/>
<rect x="14" y="29" width="10" height="1" fill="#a8a8a8"/>
<rect x="7" y="40" width="17" height="1" fill="#3cc83c"/>
<rect x="14" y="51" width="10" height="1" fill="#a8a8a8"/>
<rect x="14" y="62" width="10" height="1" fill="#a8a8a8"/>
<rect x="14" y="73" width="10" height="1" fill="#a8a8a8"/>
<rect x="14" y="85" width="10" height="1" fill="#a8a8a8"/>
<rect x="0" y="96" width="24" height="2" fill="#b01818"/>
<rect x="14" y="107" width="10" height="1" fill="#a8a8a8"/>
<rect x="14" y="118" width="10" height="1" fill="#a8a8a8"/>
<rect x="14" y="129" width="10" height="1" fill="#a8a8a8"/>
<rect x="14" y="140" width="10" height="1" fill="#a8a8a8"/>
<rect x="7" y="151" width="17" height="1" fill="#3cc83c"/>
<rect x="14" y="163" width="10" height="1" fill="#a8a8a8"/>
<rect x="14" y="174" width="10" height="1" fill="#a8a8a8"/>
<rect x="14" y="185" width="10" height="1" fill="#a8a8a8"/>
<rect x="14" y="196" width="10" height="1" fill="#a8a8a8"/>
<rect x="0" y="207" width="24" height="2" fill="#b01818"/>
<rect x="14" y="218" width="10" height="1" fill="#a8a8a8"/>
<rect x="14" y="229" width="10" height="1" fill="#a8a8a8"/>
<rect x="14" y="241" width="10" height="1" fill="#a8a8a8"/>
<rect x="14" y="252" width="10" height="1" fill="#a8a8a8"/>
<rect x="7" y="263" width="17" height="1" fill="#3cc83c"/>
<rect x="14" y="274" width="10" height="1" fill="#a8a8a8"/>
<rect x="14" y="285" width="10" height="1" fill="#a8a8a8"/>
<rect x="14" y="296" width="10" height="1" fill="#a8a8a8"/>
<rect x="14" y="307" width="10" height="1" fill="#a8a8a8"/>
<rect x="0" y="319" width="24" height="2" fill="#b01818"/>
<rect x="14" y="330" width="10" height="1" fill="#a8a8a8"/>
<rect x="14" y="341" width="10" height="1" fill="#a8a8a8"/>
<rect x="14" y="352" width="10" height="1" fill="#a8a8a8"/>
<rect x="14" y="363" width="10" height="1" fill="#a8a8a8"/>
<rect x="7" y="374" width="17" height="1" fill="#3cc83c"/>
<rect x="14" y="385" width="10" height="1" fill="#a8a8a8"/>
<rect x="14" y="397" width="10" height="1" fill="#a8a8a8"/>
<rect x="14" y="408" width="10" height="1" fill="#a8a8a8"/>
<rect x="14" y="419" width="10" height="1" fill="#a8a8a8"/>
<rect x="0" y="430" width="24" height="2" fill="#b01818"/>
<rect x="14" y="441" width="10" height="1" fill="#a8a8a8"/>
<rect x="14" y="452" width="10" height="1" fill="#a8a8a8"/>
<rect x="14" y="463" width="10" height="1" fill="#a8a8a8"/>
<rect x="14" y="475" width="10" height="1" fill="#a8a8a8"/>
<rect x="7" y="486" width="17" height="1" fill="#3cc83c"/>
<rect x="14" y="497" width="10" height="1" fill="#a8a8a8"/>
<rect x="14" y="508" width="10" height="1" fill="#a8a8a8"/>
<rect x="14" y="519" width="10" height="1" fill="#a8a8a8"/>
<rect x="14" y="530" width="10" height="1" fill="#a8a8a8"/>
<rect x="0" y="541" width="24" height="2" fill="#b01818"/>
<rect x="14" y="552" width="10" height="1" fill="#a8a8a8"/>
<rect x="14" y="564" width="10" height="1" fill="#a8a8a8"/>
<rect x="14" y="575" width="10" height="1" fill="#a8a8a8"/>
<rect x="0" y="377" width="24" height="2" fill="#b01818"/>
<text transform="translate(10,36) rotate(-90)" textLength="23.6" lengthAdjust="spacingAndGlyphs" font-family="Liberation Sans" font-size="11" fill="#e8e8e8">+ 105</text>
<text transform="translate(10,92) rotate(-90)" textLength="23.6" lengthAdjust="spacingAndGlyphs" font-family="Liberation Sans" font-size="11" fill="#e8e8e8">+ 100</text>
<text transform="translate(10,147) rotate(-90)" textLength="18.200000000000003" lengthAdjust="spacingAndGlyphs" font-family="Liberation Sans" font-size="11" fill="#e8e8e8">+ 95</text>
<text transform="translate(10,203) rotate(-90)" textLength="18.200000000000003" lengthAdjust="spacingAndGlyphs" font-family="Liberation Sans" font-size="11" fill="#e8e8e8">+ 90</text>
<text transform="translate(10,259) rotate(-90)" textLength="18.200000000000003" lengthAdjust="spacingAndGlyphs" font-family="Liberation Sans" font-size="11" fill="#e8e8e8">+ 85</text>
<text transform="translate(10,315) rotate(-90)" textLength="18.200000000000003" lengthAdjust="spacingAndGlyphs" font-family="Liberation Sans" font-size="11" fill="#e8e8e8">+ 80</text>
<text transform="translate(10,370) rotate(-90)" textLength="18.200000000000003" lengthAdjust="spacingAndGlyphs" font-family="Liberation Sans" font-size="11" fill="#e8e8e8">+ 75</text>
<text transform="translate(10,426) rotate(-90)" textLength="18.200000000000003" lengthAdjust="spacingAndGlyphs" font-family="Liberation Sans" font-size="11" fill="#e8e8e8">+ 70</text>
<text transform="translate(10,482) rotate(-90)" textLength="18.200000000000003" lengthAdjust="spacingAndGlyphs" font-family="Liberation Sans" font-size="11" fill="#e8e8e8">+ 65</text>
<text transform="translate(10,537) rotate(-90)" textLength="18.200000000000003" lengthAdjust="spacingAndGlyphs" font-family="Liberation Sans" font-size="11" fill="#e8e8e8">+ 60</text>
<text transform="translate(10,593) rotate(-90)" textLength="18.200000000000003" lengthAdjust="spacingAndGlyphs" font-family="Liberation Sans" font-size="11" fill="#e8e8e8">+ 55</text>
<rect x="0" y="586" width="363" height="24" fill="#0b0b0b"/>
<rect x="27" y="586" width="1" height="10" fill="#a8a8a8"/>
<rect x="39" y="586" width="1" height="24" fill="#c01818"/>
<rect x="50" y="586" width="1" height="10" fill="#a8a8a8"/>
<rect x="61" y="586" width="1" height="10" fill="#a8a8a8"/>
<rect x="72" y="586" width="1" height="10" fill="#a8a8a8"/>
<rect x="84" y="586" width="1" height="10" fill="#a8a8a8"/>
<rect x="95" y="586" width="1" height="17" fill="#3cc83c"/>
<rect x="106" y="586" width="1" height="10" fill="#a8a8a8"/>
<rect x="117" y="586" width="1" height="10" fill="#a8a8a8"/>
<rect x="129" y="586" width="1" height="10" fill="#a8a8a8"/>
<rect x="140" y="586" width="1" height="10" fill="#a8a8a8"/>
<rect x="151" y="586" width="1" height="24" fill="#c01818"/>
<rect x="162" y="586" width="1" height="10" fill="#a8a8a8"/>
<rect x="174" y="586" width="1" height="10" fill="#a8a8a8"/>
<rect x="185" y="586" width="1" height="10" fill="#a8a8a8"/>
<rect x="196" y="586" width="1" height="10" fill="#a8a8a8"/>
<rect x="207" y="586" width="1" height="17" fill="#3cc83c"/>
<rect x="219" y="586" width="1" height="10" fill="#a8a8a8"/>
<rect x="230" y="586" width="1" height="10" fill="#a8a8a8"/>
<rect x="241" y="586" width="1" height="10" fill="#a8a8a8"/>
<rect x="252" y="586" width="1" height="10" fill="#a8a8a8"/>
<rect x="264" y="586" width="1" height="24" fill="#c01818"/>
<rect x="275" y="586" width="1" height="10" fill="#a8a8a8"/>
<rect x="286" y="586" width="1" height="10" fill="#a8a8a8"/>
<rect x="297" y="586" width="1" height="10" fill="#a8a8a8"/>
<rect x="308" y="586" width="1" height="10" fill="#a8a8a8"/>
<rect x="320" y="586" width="1" height="17" fill="#3cc83c"/>
<rect x="331" y="586" width="1" height="10" fill="#a8a8a8"/>
<rect x="342" y="586" width="1" height="10" fill="#a8a8a8"/>
<rect x="353" y="586" width="1" height="10" fill="#a8a8a8"/>
<rect x="359" y="586" width="1" height="24" fill="#c01818"/>
<text x="41.5" y="605" transform="scale(1,1)" textLength="6.1" lengthAdjust="spacingAndGlyphs" font-family="Liberation Sans" font-size="11" fill="#e8e8e8">0</text>
<text x="100" y="605" transform="scale(1,1)" textLength="12.2" lengthAdjust="spacingAndGlyphs" font-family="Liberation Sans" font-size="11" fill="#e8e8e8">+5</text>
<text x="156" y="605" transform="scale(1,1)" textLength="18.299999999999997" lengthAdjust="spacingAndGlyphs" font-family="Liberation Sans" font-size="11" fill="#e8e8e8">+10</text>
<text x="212" y="605" transform="scale(1,1)" textLength="18.299999999999997" lengthAdjust="spacingAndGlyphs" font-family="Liberation Sans" font-size="11" fill="#e8e8e8">+15</text>
<text x="269" y="605" transform="scale(1,1)" textLength="18.299999999999997" lengthAdjust="spacingAndGlyphs" font-family="Liberation Sans" font-size="11" fill="#e8e8e8">+20</text>
<text x="325" y="605" transform="scale(1,1)" textLength="18.299999999999997" lengthAdjust="spacingAndGlyphs" font-family="Liberation Sans" font-size="11" fill="#e8e8e8">+25</text>
</svg>
<svg style="left:386px;top:79px" width="363" height="586">
<circle cx="321" cy="13" r="11.3" fill="#b4b4bc" fill-opacity="0.9" stroke="#ee2a2a" stroke-width="1.2"/>
<circle cx="321" cy="57" r="11.3" fill="#b4b4bc" fill-opacity="0.9" stroke="#ee2a2a" stroke-width="1.2"/>
<circle cx="320.5" cy="475" r="35.3" fill="#b4b4bc" fill-opacity="0.9" stroke="#e82a2a" stroke-width="1.2"/>
<circle cx="320.5" cy="475" r="24.3" fill="none" stroke="#000" stroke-width="1.3"/>
<circle cx="320.5" cy="475" r="12.5" fill="#000"/>
</svg>
<svg style="left:386px;top:79px" width="363" height="586" shape-rendering="crispEdges">
<rect x="320" y="0" width="1" height="60" fill="#7a5050" opacity="0.9"/>
<rect x="320" y="12" width="1" height="48" fill="#b02020"/>
<rect x="320" y="12" width="2" height="2" fill="#200"/>
<rect x="320" y="60" width="2" height="106" fill="#e42020"/>
<rect x="320" y="166" width="2" height="107" fill="#a81c1c"/>
<rect x="321" y="273" width="3" height="313" fill="#cc2222"/>
</svg>
<div class="a" style="left:749px;top:79px;width:17px;height:610px;background:linear-gradient(90deg,#f0f0f0,#fdfdfd 50%,#f0f0f0)"></div>
<svg style="left:749px;top:79px" width="17" height="18"><path d="M4.5 11 L8.5 7 L12.5 11 Z" fill="#303030"/></svg>
<div class="a" style="left:750px;top:97px;width:15px;height:266px;border:1px solid #979797;border-radius:2px;background:linear-gradient(90deg,#f1f1f1,#e6e6e6 50%,#d2d2d2 51%,#d6d6d6)"></div>
<svg style="left:754px;top:228px" width="8" height="8"><path d="M0 .5 H7 M0 3.5 H7 M0 6.5 H7" stroke="#444" stroke-width="1"/></svg>
<svg style="left:749px;top:672px" width="17" height="17"><path d="M4.5 6 L8.5 10 L12.5 6 Z" fill="#303030"/></svg>
<div class="a" style="left:386px;top:689px;width:363px;height:17px;background:linear-gradient(#f0f0f0,#fdfdfd 50%,#f0f0f0)"></div>
<svg style="left:386px;top:689px" width="17" height="17"><path d="M11 4.5 L7 8.5 L11 12.5 Z" fill="#303030"/></svg>
<div class="a" style="left:422px;top:690px;width:309px;height:15px;border:1px solid #979797;border-radius:2px;background:linear-gradient(#f1f1f1,#e6e6e6 50%,#d2d2d2 51%,#d6d6d6)"></div>
<svg style="left:573px;top:694px" width="8" height="8"><path d="M.5 0 V7 M3.5 0 V7 M6.5 0 V7" stroke="#444" stroke-width="1"/></svg>
<svg style="left:732px;top:689px" width="17" height="17"><path d="M6 4.5 L10 8.5 L6 12.5 Z" fill="#303030"/></svg>
<div class="a" style="left:749px;top:689px;width:17px;height:17px;background:#000"></div>
<div class="a" style="left:388px;top:666px;width:21px;height:22px;border:1px solid #a8a8a8;border-radius:3px;background:linear-gradient(#f8f8f8,#e4e4e4 50%,#d8d8d8)"></div>
<div class="t" style="left:392px;top:672px;font-size:12px;color:#1a1a40">M</div>

<!-- RIGHT DOCK -->
<div class="a" style="left:774px;top:76px;width:250px;height:19px;background:#dcdcdc;border:1px solid #c8c8c8"></div>
<div class="t" style="left:779px;top:81px;font-size:12px;color:#101010">Профиль</div>
<svg style="left:987px;top:81px" width="9" height="10" shape-rendering="crispEdges"><rect x="2" y="0" width="6" height="2" fill="#222"/><rect x="2" y="0" width="1" height="3" fill="#222"/><rect x="7" y="0" width="1" height="6" fill="#222"/><rect x="6" y="5" width="2" height="1" fill="#222"/><rect x="0" y="3" width="6" height="2" fill="#222"/><rect x="0" y="3" width="1" height="6" fill="#222"/><rect x="5" y="3" width="1" height="6" fill="#222"/><rect x="0" y="8" width="6" height="1" fill="#222"/></svg>
<svg style="left:1008px;top:82px" width="8" height="8"><path d="M0.7 0.7 L7.3 7.3 M7.3 0.7 L0.7 7.3" stroke="#222" stroke-width="1.8"/></svg>
<div class="a" style="left:777px;top:100px;width:244px;height:27px;background:#fff;border:1px solid #a8a8a8;border-radius:3px"></div>
<div class="t" style="left:784px;top:109.99px;font-size:11px;font-weight:bold;color:#111;">Профиль</div>
<div class="t" style="left:782px;top:138.49px;font-size:11px;font-weight:bold;color:#111;">Глубина:</div>
<svg style="left:836px;top:135px" width="14" height="14"><defs><radialGradient id="rg843142" cx="40%" cy="35%" r="70%"><stop offset="0" stop-color="#fff"/><stop offset="1" stop-color="#cfcfcf"/></radialGradient></defs><circle cx="7" cy="7" r="5.8" fill="url(#rg843142)" stroke="#8a8a8a" stroke-width="1"/></svg>
<div class="t" style="left:856px;top:138.07px;font-size:11.5px;color:#111;">М</div>
<svg style="left:871px;top:135px" width="14" height="14"><defs><radialGradient id="rg878142" cx="40%" cy="35%" r="70%"><stop offset="0" stop-color="#fff"/><stop offset="1" stop-color="#cfcfcf"/></radialGradient></defs><circle cx="7" cy="7" r="5.8" fill="url(#rg878142)" stroke="#8a8a8a" stroke-width="1"/></svg>
<div class="t" style="left:891px;top:138.07px;font-size:11.5px;color:#111;">П</div>
<svg style="left:904px;top:135px" width="14" height="14"><defs><radialGradient id="rg911142" cx="40%" cy="35%" r="70%"><stop offset="0" stop-color="#fff"/><stop offset="1" stop-color="#cfcfcf"/></radialGradient><radialGradient id="rc911142" cx="40%" cy="35%" r="65%"><stop offset="0" stop-color="#8fd0f5"/><stop offset="0.5" stop-color="#2a82c0"/><stop offset="1" stop-color="#0d3f6e"/></radialGradient></defs><circle cx="7" cy="7" r="5.8" fill="url(#rg911142)" stroke="#8a8a8a" stroke-width="1"/><circle cx="7" cy="7" r="3.3" fill="url(#rc911142)"/></svg>
<div class="t" style="left:924px;top:138.07px;font-size:11.5px;color:#111;">Р</div>
<div class="a" style="left:936px;top:133px;width:84px;height:18px;background:#fff;border:1px solid #e6e6e6"></div>
<div class="t" style="left:939px;top:138.07px;font-size:11.5px;color:#111;">2,000 мм</div>
<svg style="left:1005px;top:134px" width="13" height="17"><rect x="0.5" y="0.5" width="12" height="7.5" fill="#f0f3f8" stroke="#c5cad2"/><rect x="0.5" y="8.5" width="12" height="7.5" fill="#f0f3f8" stroke="#c5cad2"/><path d="M3 6 L6.5 2.5 L10 6 Z" fill="#4d6185"/><path d="M3 10.5 L6.5 14 L10 10.5 Z" fill="#4d6185"/></svg>
<div class="t" style="left:792px;top:159.49px;font-size:11px;font-weight:bold;color:#111;">Инстр.:</div>
<div class="t" style="left:837px;top:159.07px;font-size:11.5px;color:#111;">Кукуруза (Ø1.99 мм)</div>
<div class="a" style="left:838px;top:177px;width:87px;height:22px;border:1px solid #707070;border-radius:3px;background:linear-gradient(#f2f2f2 0%,#ebebeb 50%,#dddddd 51%,#cfcfcf 100%);box-shadow:inset 0 0 0 1px rgba(255,255,255,.6)"></div>
<svg style="left:850px;top:183px" width="12" height="11"><rect x="0.75" y="0.75" width="10.5" height="9.5" fill="#fff" stroke="#333" stroke-width="1.5"/><rect x="0" y="0" width="12" height="2.5" fill="#333"/><rect x="2.5" y="4" width="2.5" height="4.5" fill="#333"/><path d="M6 5 H10 M6 7.5 H10" stroke="#333" stroke-width="1"/></svg>
<div class="t" style="left:868px;top:183.07px;font-size:11.5px;color:#111;">Выбрать</div>
<div class="a" style="left:933px;top:177px;width:87px;height:22px;border:1px solid #707070;border-radius:3px;background:linear-gradient(#f2f2f2 0%,#ebebeb 50%,#dddddd 51%,#cfcfcf 100%);box-shadow:inset 0 0 0 1px rgba(255,255,255,.6)"></div>
<svg style="left:949px;top:183px" width="12" height="12"><path d="M1 11 L1.5 8 L8 1.5 L10.5 4 L4 10.5 Z" fill="none" stroke="#333" stroke-width="1.4"/><path d="M7 2.5 L9.5 5" stroke="#333" stroke-width="2"/></svg>
<div class="t" style="left:967px;top:183.07px;font-size:11.5px;color:#111;">Редакт.</div>
<div class="a" style="left:777px;top:206px;width:244px;height:3px;border:1px solid #747474;background:#fff"></div>
<div class="a" style="left:777px;top:224px;width:116px;height:65px;border:1px solid #8e8e8e;border-radius:3px;background:#fdfdfd"></div><div class="a" style="left:798px;top:221px;width:76px;height:6px;background:#f0f0f0"></div>
<div class="t" style="left:800px;top:217.07px;font-size:11.5px;color:#111;">Направление</div>
<svg style="left:783px;top:237px" width="14" height="14"><defs><radialGradient id="rg790244" cx="40%" cy="35%" r="70%"><stop offset="0" stop-color="#fff"/><stop offset="1" stop-color="#cfcfcf"/></radialGradient><radialGradient id="rc790244" cx="40%" cy="35%" r="65%"><stop offset="0" stop-color="#8fd0f5"/><stop offset="0.5" stop-color="#2a82c0"/><stop offset="1" stop-color="#0d3f6e"/></radialGradient></defs><circle cx="7" cy="7" r="5.8" fill="url(#rg790244)" stroke="#8a8a8a" stroke-width="1"/><circle cx="7" cy="7" r="3.3" fill="url(#rc790244)"/></svg>
<div class="t" style="left:803px;top:239.07px;font-size:11.5px;color:#111;">Попутное</div>
<svg style="left:783px;top:264px" width="14" height="14"><defs><radialGradient id="rg790271" cx="40%" cy="35%" r="70%"><stop offset="0" stop-color="#fff"/><stop offset="1" stop-color="#cfcfcf"/></radialGradient></defs><circle cx="7" cy="7" r="5.8" fill="url(#rg790271)" stroke="#8a8a8a" stroke-width="1"/></svg>
<div class="t" style="left:803px;top:266.07px;font-size:11.5px;color:#111;">Встречное</div>
<svg style="left:938px;top:230px" width="46" height="45"><rect x="0.5" y="0.5" width="44" height="44" fill="#fff" stroke="#000"/><circle cx="36" cy="22.5" r="6.8" fill="#ffe9a8" stroke="#333" stroke-width="0.8"/><circle cx="22.5" cy="8.5" r="6.8" fill="#f3b400" stroke="#333" stroke-width="0.8"/><path d="M22.5 8.5 H36 V22.5" fill="none" stroke="#e02020" stroke-width="1"/><path d="M22.5 8.5 L28 6 M22.5 8.5 L28 11" stroke="#e02020" stroke-width="0.8"/><circle cx="22.5" cy="8.5" r="1.2" fill="#e02020"/><circle cx="36" cy="22.5" r="1.2" fill="#e02020"/></svg>
<div class="a" style="left:777px;top:305px;width:116px;height:81px;border:1px solid #8e8e8e;border-radius:3px;background:#fdfdfd"></div><div class="a" style="left:801px;top:302px;width:69px;height:6px;background:#f0f0f0"></div>
<div class="t" style="left:803px;top:298.07px;font-size:11.5px;color:#111;">Размещение</div>
<svg style="left:783px;top:315px" width="14" height="14"><defs><radialGradient id="rg790322" cx="40%" cy="35%" r="70%"><stop offset="0" stop-color="#fff"/><stop offset="1" stop-color="#cfcfcf"/></radialGradient></defs><circle cx="7" cy="7" r="5.8" fill="url(#rg790322)" stroke="#8a8a8a" stroke-width="1"/></svg>
<div class="t" style="left:803px;top:317.07px;font-size:11.5px;color:#111;">Снаружи</div>
<svg style="left:783px;top:339px" width="14" height="14"><defs><radialGradient id="rg790346" cx="40%" cy="35%" r="70%"><stop offset="0" stop-color="#fff"/><stop offset="1" stop-color="#cfcfcf"/></radialGradient><radialGradient id="rc790346" cx="40%" cy="35%" r="65%"><stop offset="0" stop-color="#8fd0f5"/><stop offset="0.5" stop-color="#2a82c0"/><stop offset="1" stop-color="#0d3f6e"/></radialGradient></defs><circle cx="7" cy="7" r="5.8" fill="url(#rg790346)" stroke="#8a8a8a" stroke-width="1"/><circle cx="7" cy="7" r="3.3" fill="url(#rc790346)"/></svg>
<div class="t" style="left:803px;top:341.07px;font-size:11.5px;color:#111;">Внутри</div>
<svg style="left:783px;top:363px" width="14" height="14"><defs><radialGradient id="rg790370" cx="40%" cy="35%" r="70%"><stop offset="0" stop-color="#fff"/><stop offset="1" stop-color="#cfcfcf"/></radialGradient></defs><circle cx="7" cy="7" r="5.8" fill="url(#rg790370)" stroke="#8a8a8a" stroke-width="1"/></svg>
<div class="t" style="left:803px;top:365.07px;font-size:11.5px;color:#111;">Поверху</div>
<div class="a" style="left:899px;top:305px;width:122px;height:81px;border:1px solid #8e8e8e;border-radius:3px;background:#fdfdfd"></div><div class="a" style="left:942px;top:302px;width:38px;height:6px;background:#f0f0f0"></div>
<div class="t" style="left:944px;top:298.07px;font-size:11.5px;color:#111;">Мосты</div>
<div class="t" style="left:906px;top:313.99px;font-size:11px;font-weight:bold;color:#111;">Длинна:</div>
<div class="a" style="left:906px;top:331px;width:108px;height:18px;background:#fff;border:1px solid #e6e6e6"></div>
<div class="t" style="left:909px;top:336.07px;font-size:11.5px;color:#111;">0,10 мм</div>
<svg style="left:999px;top:332px" width="13" height="17"><rect x="0.5" y="0.5" width="12" height="7.5" fill="#f0f3f8" stroke="#c5cad2"/><rect x="0.5" y="8.5" width="12" height="7.5" fill="#f0f3f8" stroke="#c5cad2"/><path d="M3 6 L6.5 2.5 L10 6 Z" fill="#4d6185"/><path d="M3 10.5 L6.5 14 L10 10.5 Z" fill="#4d6185"/></svg>
<div class="a" style="left:907px;top:356px;width:107px;height:22px;border:1px solid #707070;border-radius:3px;background:linear-gradient(#f2f2f2 0%,#ebebeb 50%,#dddddd 51%,#cfcfcf 100%);box-shadow:inset 0 0 0 1px rgba(255,255,255,.6)"></div>
<svg style="left:912px;top:360px" width="13" height="13"><path d="M3 0.5 L9 9 M10 0.5 L4 9" stroke="#444" stroke-width="1.1"/><circle cx="3.2" cy="10.3" r="2" fill="none" stroke="#444" stroke-width="1.1"/><circle cx="9.8" cy="10.3" r="2" fill="none" stroke="#444" stroke-width="1.1"/></svg>
<div class="t" style="left:930px;top:363.07px;font-size:11.5px;color:#111;">Добавить мост</div>
<div class="a" style="left:777px;top:392px;width:244px;height:3px;border:1px solid #747474;background:#fff"></div>
<div class="t" style="left:777.5px;top:406.99px;font-size:11px;font-weight:bold;color:#111;">Название:</div>
<div class="a" style="left:837px;top:401px;width:184px;height:20px;background:#fff;border:1px solid #e3e3e3;border-top-color:#a8a8a8;border-radius:2px"></div>
<div class="t" style="left:840px;top:406.57px;font-size:11.5px;color:#111;">Профиль внутри</div>
<div class="a" style="left:778px;top:428px;width:242px;height:23px;border:1px solid #3c7fb1;border-radius:3px;background:linear-gradient(#eaf6fd 0%,#d9f0fc 50%,#bee6fd 51%,#a7d9f5 100%);box-shadow:inset 0 0 0 1px rgba(255,255,255,.6)"></div>
<svg style="left:871px;top:433px" width="11" height="13"><path d="M3 12.5 H0.5 V0.5 H6.5 L10.5 4.5 V12.5 H7" fill="none" stroke="#333" stroke-width="1"/><path d="M3 6 V9.5 H7.5 M6 8 L7.5 9.5 L6 11" fill="none" stroke="#333" stroke-width="1"/></svg>
<div class="t" style="left:888px;top:435.57px;font-size:11.5px;color:#111;">Создать</div>
<div class="a" style="left:778px;top:458px;width:242px;height:22px;border:1px solid #707070;border-radius:3px;background:linear-gradient(#f2f2f2 0%,#ebebeb 50%,#dddddd 51%,#cfcfcf 100%);box-shadow:inset 0 0 0 1px rgba(255,255,255,.6)"></div>
<svg style="left:869px;top:463px" width="13" height="13"><circle cx="6.5" cy="6.5" r="6.2" fill="#d9404e"/><path d="M4 4 L9 9 M9 4 L4 9" stroke="#fff" stroke-width="1.5"/></svg>
<div class="t" style="left:887px;top:465.07px;font-size:11.5px;color:#111;">Закрыть</div>

<!-- TASKBAR -->
<div class="a" style="left:0;top:728px;width:1024px;height:40px;background:#fff;border-top:1px solid #2a3a4a;border-bottom:1px solid #5f8fb5"></div>
<div class="a" style="left:0;top:729px;width:3px;height:38px;background:#15407a"></div>
<div class="a" style="left:938px;top:729px;width:72px;height:38px;background:linear-gradient(#6a9ab8,#4a88b0 40%,#4f8db5)"></div>
<div class="t" style="left:957.5px;top:734.5px;color:#fff;font-size:12.2px;letter-spacing:-0.5px">15:47</div>
<div class="t" style="left:943.5px;top:751.5px;color:#fff;font-size:12.2px;letter-spacing:-0.45px">29.11.2019</div>
<div class="a" style="left:1010px;top:729px;width:14px;height:38px;background:linear-gradient(#7a98ac,#5a88a8 40%,#6aa8d0);border:1px solid #a8c8dc;box-shadow:inset 0 0 0 1px #3a6080"></div>
<svg style="left:0;top:0" width="1032" height="774" fill="none" stroke="#2aa844" stroke-width="2.7" stroke-linejoin="round" stroke-linecap="round">
<path d="M89.7 145.8 C87.0 145.5 76.7 145.3 70.0 145.2 C63.3 145.1 55.0 143.4 49.7 145.4 C44.4 147.4 40.0 154.2 38.1 157.0 C36.2 159.8 37.8 160.4 38.1 162.4 C38.5 164.4 38.3 167.2 40.2 169.2 C42.1 171.2 46.9 173.1 49.7 174.6 C52.5 176.1 51.6 177.4 57.1 178.0 C62.6 178.6 77.2 179.0 82.9 178.0 C88.6 177.0 89.2 174.5 91.0 171.9 C92.8 169.3 93.3 164.9 93.8 162.4 C94.3 159.9 94.9 159.2 93.8 157.0 C92.7 154.8 88.2 151.2 87.0 149.5 C85.8 147.8 85.8 147.4 86.3 146.8 C86.8 146.2 92.4 146.1 89.7 145.8 Z"/>
<path d="M698.0 75.4 C701.6 74.7 709.2 74.3 714.2 75.4 C719.2 76.5 724.6 79.5 727.8 82.2 C731.0 84.9 732.2 87.0 733.2 91.7 C734.2 96.5 733.9 103.0 733.9 110.7 C733.9 118.4 733.8 131.0 733.2 137.8 C732.6 144.6 731.9 147.2 730.5 151.3 C729.1 155.4 727.4 159.5 725.1 162.2 C722.9 164.9 720.4 166.7 717.0 167.6 C713.6 168.5 709.0 168.7 704.7 167.6 C700.4 166.5 695.5 163.5 691.2 160.8 C686.9 158.1 682.4 154.7 679.0 151.3 C675.6 147.9 672.3 146.8 670.8 140.5 C669.3 134.2 669.3 121.8 670.2 113.4 C671.1 105.0 674.6 94.2 676.3 90.3 C678.0 86.4 678.5 91.0 680.3 90.3 C682.1 89.6 685.1 88.1 687.1 86.3 C689.1 84.5 690.7 81.3 692.5 79.5 C694.3 77.7 694.4 76.1 698.0 75.4 Z"/>
<path d="M833.0 156.3 C834.5 155.2 835.1 154.3 840.6 153.8 C846.1 153.3 855.3 153.0 865.8 153.1 C876.3 153.2 894.8 153.8 903.6 154.4 C912.4 155.0 914.5 155.9 918.7 156.9 C922.9 157.9 924.0 159.6 928.8 160.7 C933.6 161.8 944.2 161.8 947.6 163.2 C951.0 164.6 949.5 167.3 948.9 168.9 C948.3 170.5 955.6 172.1 943.9 172.7 C932.1 173.3 891.4 172.5 878.4 172.7 C865.4 172.9 872.5 173.8 865.8 173.9 C859.1 174.0 843.7 174.1 838.1 173.3 C832.5 172.5 833.5 171.1 832.4 168.9 C831.3 166.7 831.7 162.2 831.8 160.1 C831.9 158.0 831.5 157.4 833.0 156.3 Z"/>
<path d="M778.7 335.1 C785.2 333.6 804.9 334.6 812.6 334.2 C820.3 333.8 819.8 333.0 825.0 332.9 C830.2 332.8 839.5 332.5 843.8 333.3 C848.1 334.1 849.6 335.7 850.9 337.8 C852.1 339.9 851.8 343.0 851.3 345.8 C850.8 348.6 850.2 352.9 848.2 354.7 C846.2 356.5 842.3 356.9 839.3 356.5 C836.3 356.1 833.4 352.8 830.4 352.1 C827.4 351.4 826.0 351.5 821.5 352.1 C817.0 352.7 810.3 354.6 803.6 355.6 C796.9 356.6 786.5 358.5 781.4 358.3 C776.3 358.1 774.6 357.2 773.3 354.7 C771.9 352.2 772.4 346.5 773.3 343.2 C774.2 339.9 772.2 336.6 778.7 335.1 Z"/>
</svg>
</body></html>
